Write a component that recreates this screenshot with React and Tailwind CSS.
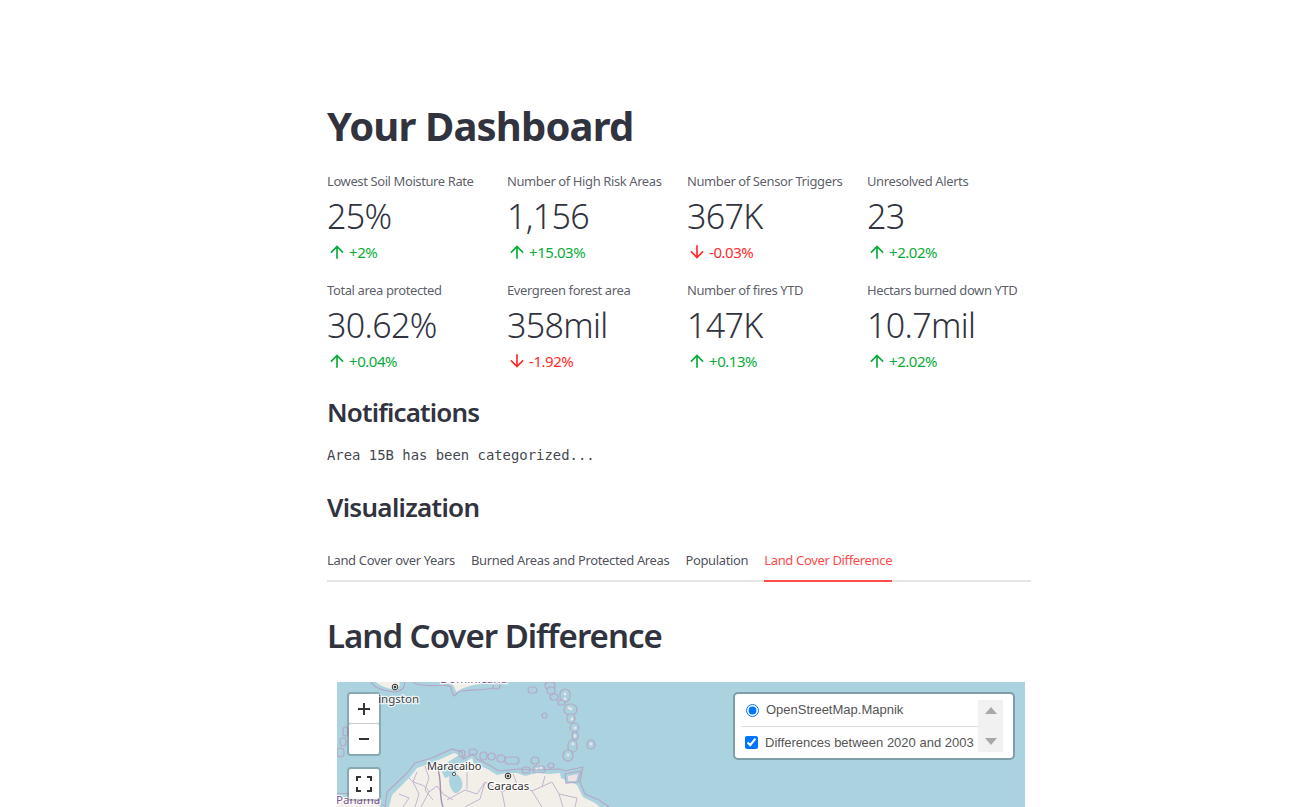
const up = "M4 12l1.41 1.41L11 7.83V20h2V7.83l5.58 5.59L20 12l-8-8-8 8z";
const down = "M20 12l-1.41-1.41L13 16.17V4h-2v12.17l-5.58-5.59L4 12l8 8 8-8z";

const rows = [
  [
    ["Lowest Soil Moisture Rate", "25%", "+2%", true],
    ["Number of High Risk Areas", "1,156", "+15.03%", true],
    ["Number of Sensor Triggers", "367K", "-0.03%", false],
    ["Unresolved Alerts", "23", "+2.02%", true],
  ],
  [
    ["Total area protected", "30.62%", "+0.04%", true],
    ["Evergreen forest area", "358mil", "-1.92%", false],
    ["Number of fires YTD", "147K", "+0.13%", true],
    ["Hectars burned down YTD", "10.7mil", "+2.02%", true],
  ],
];

function Metric({ label, value, delta, good }) {
  return (
    <div className="flex h-[93px] w-[164px] flex-col">
      <div className="h-[18px] whitespace-nowrap text-[13px] leading-[18px] tracking-[-0.4px] text-[#31333fcc]">{label}</div>
      <div className="h-[52px] whitespace-nowrap text-[34px] leading-[52px] font-light tracking-[-0.65px] text-[#31333f]">{value}</div>
      <div className={`flex h-[20px] items-center gap-[2px] text-[15px] leading-[20px] tracking-[-0.45px] ${good ? "text-[#09ab3b]" : "text-[#ff2b2b]"}`}>
        <svg viewBox="0 0 24 24" className="h-5 w-5" fill="currentColor"><path d={good ? up : down} /></svg>
        <span>{delta}</span>
      </div>
    </div>
  );
}

// [x1, x2, y1, y2] boxes of the outlined islands, read off the picture
const boxes = [
  [223, 233, 7, 20], [213, 221, 12, 18], [208, 218, 0, 7], [210, 218, 5, 12], [221, 228, 18, 23],
  [227, 240, 22, 33], [230, 238, 32, 41], [233, 242, 41, 50], [235, 241, 50, 58], [231, 240, 58, 70],
  [226, 236, 68, 79], [250, 258, 58, 67], [205, 210, 31, 36],
  [143, 150, 70, 78], [151, 158, 71, 78], [160, 168, 73, 80], [168, 182, 75, 82], [194, 202, 75, 82],
  [185, 193, 85, 91], [196, 208, 84, 91], [211, 217, 81, 86],
  [6, 11, 45, 54], [3, 9, 56, 64], [0, 7, 66, 75], [122, 128, 68, 75], [132, 140, 67, 73],
  [156, 163, 1, 7], [191, 200, 5, 11],
];
const specks = [[228, 12], [228, 17], [234, 27], [232, 26], [235, 37], [238, 46], [238, 54], [236, 62], [231, 73], [254, 62], [200, 87], [204, 86]];

function MapArt() {
  return (
    <svg viewBox="0 0 688 125" className="block h-[125px] w-[688px]">
      <rect width="688" height="125" fill="#aad3df" />
      {/* Jamaica */}
      <path d="M33 -2 C36 6 46 9 58 10 C66 9 69 4 67 -2 Z" fill="none" stroke="#b5a8c6" strokeWidth="1.2" />
      <path d="M38 -1 C42 4 52 7 60 8 C63 6 63 2 62 -1 Z" fill="#f2efe9" />
      {/* Hispaniola */}
      <path d="M77 1 C90 6 104 2 113 4 C115 8 115 12 117 14 C120 12 121 9 124 9 C135 8 147 8 157 6 C160 5 164 3 166 -2 L77 -2 Z" fill="#aad3df" stroke="#b5a8c6" strokeWidth="1.2" />
      <path d="M96 -1 C104 1 112 1 116 3 C118 6 118 9 120 10 C122 8 125 6 130 5 C136 3 142 2 148 -1 Z" fill="#f2efe9" />
      {boxes.map(([a, b, c, d], i) => (
        <rect key={i} x={a} y={c} width={b - a} height={d - c} rx={Math.min(b - a, d - c) / 2} fill="#a9d1de" stroke="#b5a8c6" strokeWidth="1.2" />
      ))}
      {specks.map(([x, y], i) => (
        <circle key={i} cx={x} cy={y} r="1.4" fill="#ece6e8" />
      ))}
      {/* Territorial outline */}
      <path d="M48 125 L50 110 L70 91 L78 81 L95 76 L115 67 L125 70 L126 77 L136 72 L140 77 L152 83 L162 89 L182 87 L200 88 L222 87 L228 89 L246 85 L243 100 L248 112 L262 118 L272 125" fill="none" stroke="#b5a8c6" strokeWidth="1.2" />
      {/* South America */}
      <path d="M52 125 L55 113 L72 96 L80 86 L97 80 L117 71 L122 73 L111 80 L104 88 L108 96 L116 93 L122 87 L124 82 L135 76 L137 82 L142 83 L152 88 L160 93 L170 91 L180 91 L188 94 L200 91 L213 92 L223 91 L224 96 L240 103 L246 115 L258 121 L263 125 Z" fill="#f2efe9" />
      {/* Panama */}
      <path d="M0 116 C12 114 30 117 44 125 L0 125 Z" fill="#f2efe9" />
      <path d="M0 112 C16 110 34 114 49 125" fill="none" stroke="#b5a8c6" />
      {/* Trinidad */}
      <path d="M228 92 L244 89 L241 100 L229 101 Z" fill="#aad3df" stroke="#b5a8c6" strokeWidth="1.2" />
      <path d="M231 94 L241 92 L239 99 L231 99 Z" fill="#efe2e6" />
      {/* Lake Maracaibo */}
      <path d="M113 94 C117 89 123 93 125 100 C126 106 122 111 118 111 C114 108 111 101 113 94 Z" fill="#aad3df" stroke="#bcd0da" strokeWidth="0.6" />
      {/* Borders */}
      <g fill="none" stroke="#c4b4cf" strokeWidth="1">
        <path d="M72 96 C78 104 88 100 92 110 L84 125" />
        <path d="M80 90 L76 100 L82 112 L78 125" />
        <path d="M88 84 L92 96 L88 108 L96 118" />
        <path d="M62 112 L72 116 L66 125" />
        <path d="M92 110 L100 104 L106 112 L116 118" />
        <path d="M110 118 L128 108 L140 112 L148 100 L165 110 L180 102 L195 109 L215 100 L222 112 L240 116" />
        <path d="M148 100 L143 117 L128 125" />
        <path d="M130 90 L130 107" />
        <path d="M165 110 L168 125" />
        <path d="M180 102 L176 92" />
        <path d="M195 109 L205 125" />
        <path d="M205 105 L208 94" />
        <path d="M222 112 L226 125" />
        <path d="M240 116 L238 125" />
      </g>
      <path d="M100 84 C106 100 101 112 106 125" fill="none" stroke="#a78fb0" strokeWidth="1.4" />
      {/* Labels */}
      <g style={{ fontFamily: "'Noto Sans', sans-serif", paintOrder: "stroke" }} stroke="#ffffffcc" strokeWidth="2.5">
        <text x="-1" y="122" fontSize="11.5" fill="#7d5a92">Panama</text>
        <text x="103" y="0.5" fontSize="12" fill="#7d5a92">Dominicana</text>
        <text x="34" y="21" fontSize="11.5" fill="#444">Kingston</text>
        <text x="90" y="88" fontSize="11" fill="#333">Maracaibo</text>
        <text x="150" y="108" fontSize="11.5" fill="#333">Caracas</text>
      </g>
      <g fill="none" stroke="#333">
        <circle cx="58" cy="5" r="2.8" fill="#fff" /><circle cx="58" cy="5" r="1" fill="#333" />
        <circle cx="171" cy="94" r="2.8" fill="#fff" /><circle cx="171" cy="94" r="1" fill="#333" />
        <circle cx="117" cy="92" r="1.6" fill="#fff" stroke="#555" />
      </g>
    </svg>
  );
}

function ControlButton({ children, bordered }) {
  return (
    <div className={`flex h-[30px] w-[30px] items-center justify-center rounded-[2px] bg-white text-[#333] ${bordered ? "border-b border-[#ccc]" : ""}`}>
      {children}
    </div>
  );
}

export default function App() {
  return (
    <div className="h-[807px] overflow-hidden bg-white font-['Noto_Sans',sans-serif]">
      <div className="ml-[327px] w-[704px] pt-[96px]">
        <h1 className="h-[60px] text-[40px] leading-[60px] font-bold tracking-[-0.85px] text-[#31333f]">Your Dashboard</h1>
        <div className="mt-[16px] flex flex-col gap-[16px]">
          {rows.map((row, i) => (
            <div key={i} className="flex gap-[16px]">
              {row.map((m) => (
                <Metric key={m[0]} label={m[0]} value={m[1]} delta={m[2]} good={m[3]} />
              ))}
            </div>
          ))}
        </div>
        <h2 className="mt-[18px] h-[40px] text-[26px] leading-[40px] font-semibold tracking-[-0.85px] text-[#31333f]">Notifications</h2>
        <div className="mt-[13px] h-[20px] font-['DejaVu_Sans_Mono',monospace] text-[13.9px] leading-[20px] text-[#454751]">Area 15B has been categorized...</div>
        <h2 className="mt-[22px] h-[40px] text-[26px] leading-[40px] font-semibold tracking-[-0.7px] text-[#31333f]">Visualization</h2>
        <div className="mt-[14px] flex h-[41px] gap-[16px] border-b-2 border-[#e6e6e6] text-[13px] tracking-[-0.35px] text-[#31333fdd]">
          <div className="flex items-center">Land Cover over Years</div>
          <div className="flex items-center">Burned Areas and Protected Areas</div>
          <div className="flex items-center">Population</div>
          <div className="-mb-[2px] flex items-center border-b-2 border-[#ff4b4b] text-[#ff4b4b]">Land Cover Difference</div>
        </div>
        <h2 className="mt-[30px] h-[48px] text-[33px] leading-[48px] font-semibold tracking-[-1px] text-[#31333f]">Land Cover Difference</h2>
        <div className="relative mx-[10px] mt-[22px] h-[125px] w-[688px] overflow-hidden">
          <MapArt />
          <div className="absolute top-[10px] left-[10px] rounded-[4px] border-2 border-[#00000033] bg-clip-padding">
            <ControlButton bordered>
              <svg viewBox="0 0 14 14" className="h-[14px] w-[14px]"><path d="M6 1h2v5h5v2H8v5H6V8H1V6h5z" fill="#333" /></svg>
            </ControlButton>
            <ControlButton>
              <svg viewBox="0 0 14 14" className="h-[14px] w-[14px]"><path d="M2 6h10v2H2z" fill="#333" /></svg>
            </ControlButton>
          </div>
          <div className="absolute top-[85px] left-[10px] rounded-[4px] border-2 border-[#00000033] bg-clip-padding">
            <ControlButton>
              <svg viewBox="0 0 16 16" className="h-4 w-4" fill="none" stroke="#333" strokeWidth="2"><path d="M1 5V1h4M11 1h4v4M15 11v4h-4M5 15H1v-4" /></svg>
            </ControlButton>
          </div>
          <div className="absolute top-[10px] left-[396px] flex h-[68px] w-[282px] rounded-[5px] border-2 border-[#00000040] bg-white bg-clip-padding font-['Liberation_Sans',sans-serif] text-[13px] text-[#555]">
            <div className="ml-[6px] flex w-[237px] flex-col pt-[2px]">
              <label className="flex h-[32px] items-center gap-[7px] border-b border-[#ddd] pb-[2px] pl-[5px]">
                <input type="radio" readOnly checked className="m-0 h-[13px] w-[13px]" />
                <span className="whitespace-nowrap">OpenStreetMap.Mapnik</span>
              </label>
              <label className="flex h-[32px] items-center gap-[7px] pl-[4px]">
                <input type="checkbox" readOnly checked className="m-0 h-[13px] w-[13px]" />
                <span className="whitespace-nowrap">Differences between 2020 and 2003</span>
              </label>
            </div>
            <div className="mt-[6px] flex h-[52px] w-[25px] flex-col items-center justify-between bg-[#f1f1f1] py-[7px]">
              <svg viewBox="0 0 12 7" className="h-[7px] w-[12px]"><path d="M6 0l6 7H0z" fill="#a8a8a8" /></svg>
              <svg viewBox="0 0 12 7" className="h-[7px] w-[12px]"><path d="M0 0h12L6 7z" fill="#a8a8a8" /></svg>
            </div>
          </div>
        </div>
      </div>
    </div>
  );
}
